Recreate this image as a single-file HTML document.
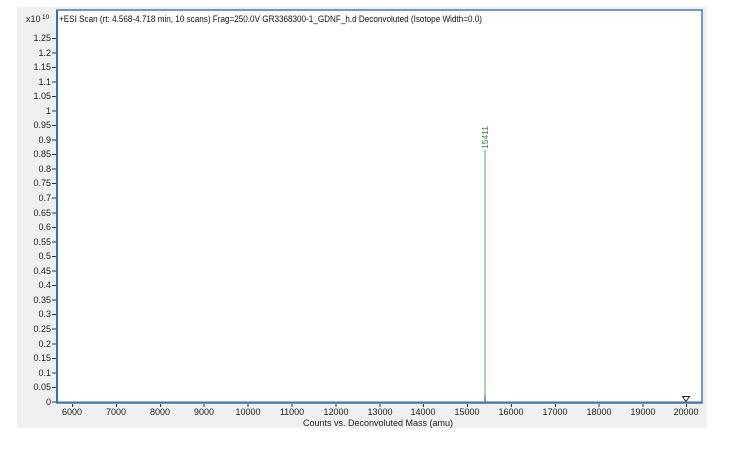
<!DOCTYPE html>
<html><head><meta charset="utf-8"><style>
html,body{margin:0;padding:0;background:#fff;width:730px;height:454px;overflow:hidden}
svg{display:block;font-family:"Liberation Sans",Arial,sans-serif}
</style></head><body>
<svg width="730" height="454" viewBox="0 0 730 454" xmlns="http://www.w3.org/2000/svg">
<rect x="17" y="7" width="690" height="421" fill="#f0f0f0"/>
<rect x="57" y="10" width="645" height="393" fill="#fff"/>
<text x="26" y="22" font-size="9" fill="#222">x10</text>
<text x="42" y="19" font-size="6.5" fill="#222">10</text>
<text x="59" y="22" font-size="9" fill="#111" textLength="423" lengthAdjust="spacingAndGlyphs">+ESI Scan (rt: 4.568-4.718 min, 10 scans) Frag=250.0V GR3368300-1_GDNF_h.d  Deconvoluted (Isotope Width=0.0)</text>
<g font-size="9" fill="#222" text-anchor="end">
<text x="51" y="41">1.25</text><text x="51" y="56">1.2</text><text x="51" y="70">1.15</text><text x="51" y="85">1.1</text><text x="51" y="99">1.05</text><text x="51" y="114">1</text><text x="51" y="128">0.95</text><text x="51" y="143">0.9</text><text x="51" y="157">0.85</text><text x="51" y="172">0.8</text><text x="51" y="186">0.75</text><text x="51" y="201">0.7</text><text x="51" y="216">0.65</text><text x="51" y="230">0.6</text><text x="51" y="245">0.55</text><text x="51" y="259">0.5</text><text x="51" y="274">0.45</text><text x="51" y="288">0.4</text><text x="51" y="303">0.35</text><text x="51" y="317">0.3</text><text x="51" y="332">0.25</text><text x="51" y="347">0.2</text><text x="51" y="361">0.15</text><text x="51" y="376">0.1</text><text x="51" y="390">0.05</text><text x="51" y="405">0</text>
</g>
<g stroke="#333" stroke-width="1">
<path d="M52 38.5h4M52 53h4M52 67.5h4M52 82h4M52 96.5h4M52 111h4M52 125.5h4M52 140h4M52 154.5h4M52 169h4M52 183.5h4M52 198h4M52 213h4M52 227.5h4M52 242h4M52 256.5h4M52 271h4M52 285.5h4M52 300h4M52 314.5h4M52 329h4M52 344h4M52 358.5h4M52 373h4M52 387.5h4M52 402h4"/>
<path d="M72.5 404v3M116.5 404v3M160.5 404v3M204 404v3M248 404v3M292 404v3M336 404v3M380 404v3M423.5 404v3M467.5 404v3M511.5 404v3M555.5 404v3M599 404v3M643 404v3M686.5 404v3"/>
</g>
<g font-size="9" fill="#222" text-anchor="middle">
<text x="72" y="415">6000</text><text x="116" y="415">7000</text><text x="160" y="415">8000</text><text x="204" y="415">9000</text><text x="248" y="415">10000</text><text x="292" y="415">11000</text><text x="336" y="415">12000</text><text x="380" y="415">13000</text><text x="423" y="415">14000</text><text x="467" y="415">15000</text><text x="511" y="415">16000</text><text x="555" y="415">17000</text><text x="599" y="415">18000</text><text x="643" y="415">19000</text><text x="686" y="415">20000</text>
<text x="378" y="426">Counts vs. Deconvoluted Mass (amu)</text>
</g>
<line x1="485" y1="150" x2="485" y2="402" stroke="#4caf50" stroke-width="1"/>
<line x1="485" y1="395" x2="485" y2="402" stroke="#225522" stroke-width="1"/>
<text transform="translate(488,149) rotate(-90)" font-size="8.5" fill="#2e7d32">15411</text>
<path d="M682.5 396.5h7l-3.5 5z" fill="none" stroke="#222" stroke-width="1"/>
<path d="M57 402.5h645" stroke="#3a6ea5" stroke-width="2"/>
<rect x="57" y="10" width="645" height="393" fill="none" stroke="#4a76ad" stroke-width="1.5"/>
<line x1="57" y1="10" x2="57" y2="403" stroke="#3a6ea5" stroke-width="2"/>
</svg>
</body></html>
